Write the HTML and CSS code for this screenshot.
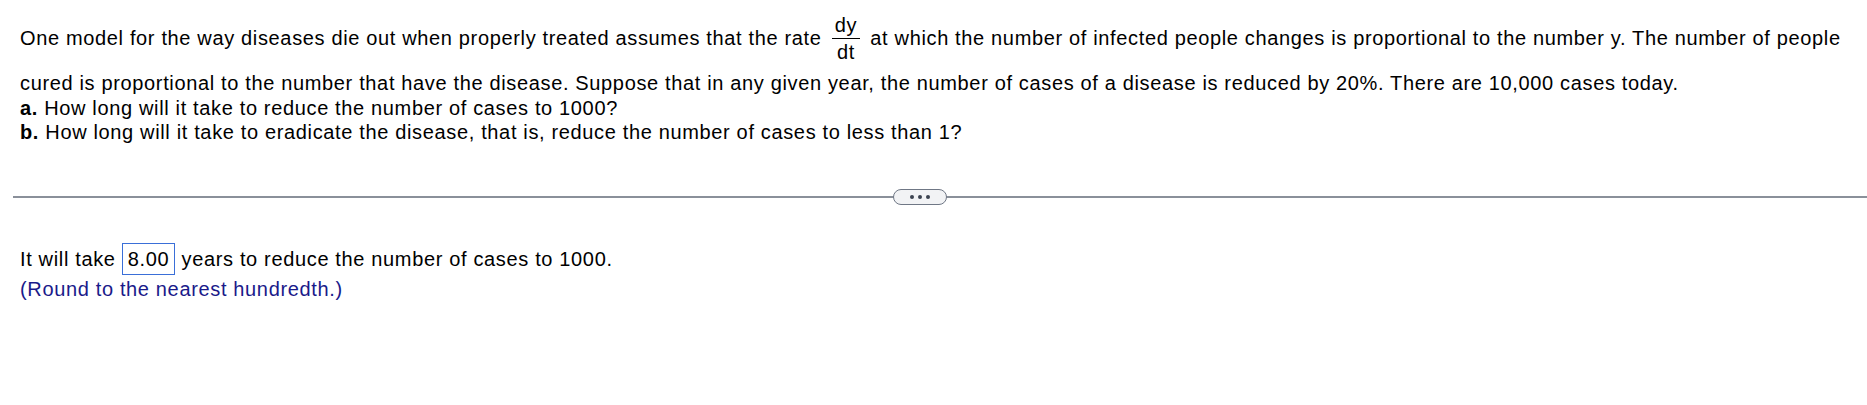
FILE: index.html
```html
<!DOCTYPE html>
<html>
<head>
<meta charset="utf-8">
<link rel="stylesheet" href="styles.css">
</head>
<body>
<div class="question">
  <p class="para">One model for the way diseases die out when properly treated assumes that the rate <span class="frac"><span class="num">dy</span><span class="den">dt</span></span> at which the number of infected people changes is proportional to the number y. The number of people cured is proportional to the number that have the disease. Suppose that in any given year, the number of cases of a disease is reduced by 20%. There are 10,000 cases today.<br><b>a.</b> How long will it take to reduce the number of cases to 1000?<br><b>b.</b> How long will it take to eradicate the disease, that is, reduce the number of cases to less than 1?</p>
</div>
<div class="divider">
  <span class="pill"><span class="dot"></span><span class="dot"></span><span class="dot"></span></span>
</div>
<div class="answer">
  <p class="ans-line">It will take <span class="box">8.00</span> years to reduce the number of cases to 1000.</p>
  <p class="hint">(Round to the nearest hundredth.)</p>
</div>
</body>
</html>
```
FILE: styles.css
```css
html, body {
  margin: 0;
  padding: 0;
  background: #ffffff;
}
body {
  font-family: "Liberation Sans", Arial, sans-serif;
  font-size: 20px;
  letter-spacing: 0.65px;
  color: #000000;
}
.question {
  padding: 14px 20px 0 20px;
}
.para {
  margin: 0;
  line-height: 24.5px;
}
.frac {
  display: inline-flex;
  flex-direction: column;
  align-items: center;
  vertical-align: 13px;
  margin: 0 4px;
  line-height: 23px;
}
.num {
  padding: 0 3px 1px 3px;
  border-bottom: 1px solid #000;
}
.den {
  padding: 2px 3px 7px 3px;
}
.divider {
  margin: 44px 0 0 13px;
  height: 16px;
  display: flex;
  align-items: center;
  position: relative;
}
.divider::before {
  content: "";
  flex: 1;
  height: 2px;
  background: #8a909a;
}
.pill {
  position: absolute;
  left: 880px;
  top: 0;
  width: 52px;
  height: 14px;
  border: 1px solid #6f7785;
  border-radius: 8px;
  background: #f2f3f5;
  display: flex;
  align-items: center;
  justify-content: center;
  gap: 4px;
}
.dot {
  width: 4px;
  height: 4px;
  border-radius: 50%;
  background: #3c4350;
}
.answer {
  padding: 38px 20px 0 20px;
}
.ans-line {
  margin: 0;
  line-height: 32px;
}
.box {
  display: inline-block;
  border: 1px solid #3a6fd8;
  padding: 0 5px;
  line-height: 30px;
}
.hint {
  margin: 0;
  line-height: 28px;
  color: #1a1a8a;
}
```
